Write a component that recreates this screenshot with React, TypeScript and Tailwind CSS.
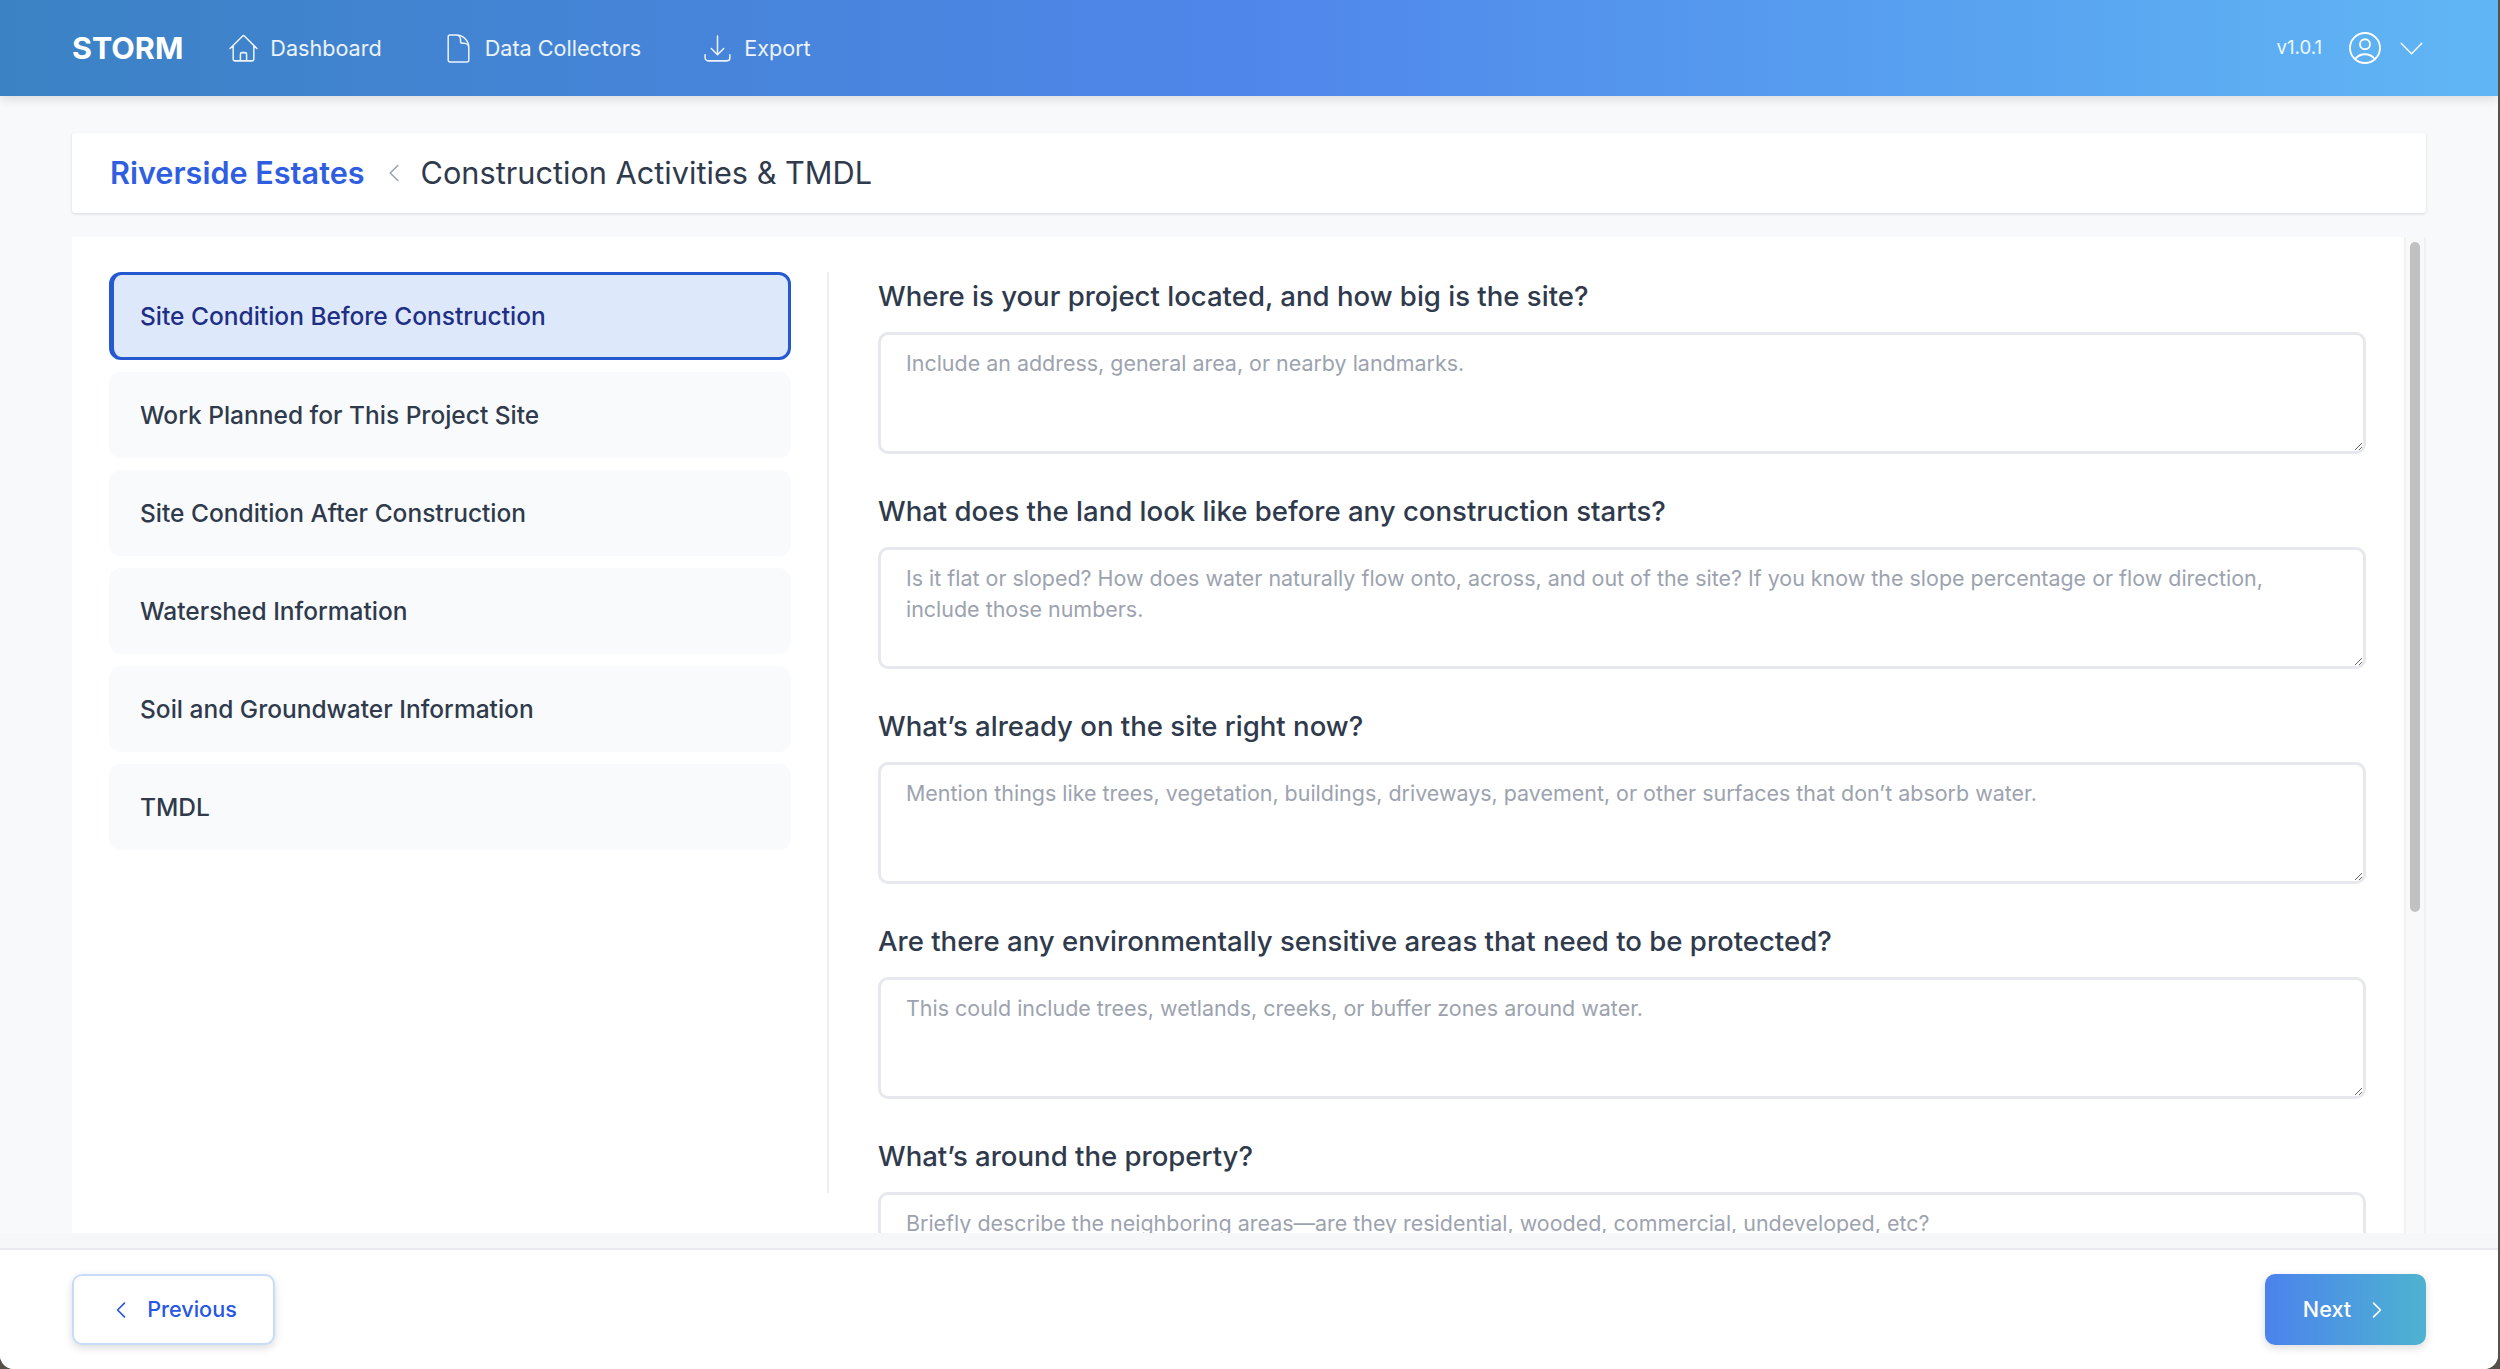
import React from 'react';
import {
  HiOutlineHome,
  HiOutlineDocument,
  HiOutlineArrowDownTray,
  HiOutlineUserCircle,
  HiOutlineChevronDown,
  HiOutlineChevronLeft,
  HiOutlineChevronRight,
} from 'react-icons/hi2';

const sections = [
  'Site Condition Before Construction',
  'Work Planned for This Project Site',
  'Site Condition After Construction',
  'Watershed Information',
  'Soil and Groundwater Information',
  'TMDL',
];

const questions = [
  {
    label: 'Where is your project located, and how big is the site?',
    hint: 'Include an address, general area, or nearby landmarks.',
  },
  {
    label: 'What does the land look like before any construction starts?',
    hint: 'Is it flat or sloped? How does water naturally flow onto, across, and out of the site? If you know the slope percentage or flow direction, include those numbers.',
  },
  {
    label: 'What’s already on the site right now?',
    hint: 'Mention things like trees, vegetation, buildings, driveways, pavement, or other surfaces that don’t absorb water.',
  },
  {
    label: 'Are there any environmentally sensitive areas that need to be protected?',
    hint: 'This could include trees, wetlands, creeks, or buffer zones around water.',
  },
  {
    label: 'What’s around the property?',
    hint: 'Briefly describe the neighboring areas—are they residential, wooded, commercial, undeveloped, etc?',
  },
];

const navItems = [
  { label: 'Dashboard', icon: HiOutlineHome },
  { label: 'Data Collectors', icon: HiOutlineDocument },
  { label: 'Export', icon: HiOutlineArrowDownTray },
];

export default function App() {
  return (
    <div className="h-screen w-full overflow-hidden bg-[#55504a] pr-[2px] font-['Inter','Liberation_Sans',sans-serif]">
      <div className="flex h-full flex-col overflow-hidden rounded-b-[14px] bg-[#f8f9fb]">
        <header className="z-10 flex h-[96px] shrink-0 items-center bg-gradient-to-r from-[#3b82c4] via-[#4f86ea] to-[#60b6f4] pl-[72px] pr-[70px] text-white shadow-[0_3px_10px_rgba(0,0,0,0.12)]">
          <span className="text-[30.5px] font-bold leading-none">STORM</span>
          <nav className="ml-[44px] flex items-center gap-[60px]">
            {navItems.map((item) => (
              <div key={item.label} className="flex items-center gap-[10px] text-[21.6px] text-white/90">
                <item.icon size={33} strokeWidth={1.1} />
                <span>{item.label}</span>
              </div>
            ))}
          </nav>
          <div className="ml-auto flex items-center text-white/90">
            <span className="text-[18.6px]">v1.0.1</span>
            <HiOutlineUserCircle size={40} strokeWidth={1.1} className="ml-[23px] text-white" />
            <HiOutlineChevronDown size={33} strokeWidth={1} className="ml-[10px] text-white" />
          </div>
        </header>

        <main className="flex min-h-0 flex-1 flex-col px-[72px] pt-[37px]">
          <div className="flex h-[80px] shrink-0 items-center rounded-[3px] bg-white px-[38px] shadow-[0_1px_3px_rgba(0,0,0,0.14)]">
            <span className="text-[30.6px] font-semibold text-[#2f5fe0]">Riverside Estates</span>
            <HiOutlineChevronLeft size={24} strokeWidth={1.6} className="ml-[17px] text-[#9ca3af]" />
            <span className="ml-[15px] text-[30.7px] text-[#2f3a4c]">Construction Activities &amp; TMDL</span>
          </div>

          <div className="mt-[24px] flex min-h-0 flex-1 overflow-hidden bg-white">
            <aside className="w-[757px] shrink-0 pb-[40px] pl-[37px] pt-[35px]">
              <div className="flex h-full flex-col gap-[12px] border-r-2 border-[#eceef1] pr-[36px]">
                {sections.map((name, i) => (
                  <div
                    key={name}
                    className={
                      i === 0
                        ? 'flex h-[88px] items-center rounded-[12px] border-[3px] border-l-[5px] border-[#2459cf] bg-[#dee8fb] pl-[26px] text-[24.5px] font-medium text-[#1e2f86]'
                        : 'flex h-[86px] items-center rounded-[12px] bg-[#f9fafb] pl-[31px] text-[24.5px] font-medium text-[#2f3a4c]'
                    }
                  >
                    {name}
                  </div>
                ))}
              </div>
            </aside>

            <section className="min-w-0 flex-1 overflow-hidden pl-[49px] pr-[38px] pt-[39px]">
              {questions.map((q) => (
                <div key={q.label} className="mb-[37px]">
                  <label className="block text-[27.55px] font-medium leading-[40px] text-[#2f3a4c]">{q.label}</label>
                  <textarea
                    placeholder={q.hint}
                    className="mt-[16px] block h-[122px] w-full rounded-[10px] border-[3px] border-[#e6e8ed] bg-white px-[25px] py-[13px] text-[21.45px] leading-[31px] outline-none placeholder:text-[#9ca3af]"
                  />
                </div>
              ))}
            </section>

            <div className="w-[22px] shrink-0 border-x-2 border-[#f0f1f3] bg-[#f9f9fa] px-[4px] pt-[5px]">
              <div className="h-[670px] rounded-full bg-[#c1c1c1]" />
            </div>
          </div>
        </main>

        <div className="h-[15px] shrink-0 bg-[#f6f7f9]" />

        <footer className="flex h-[121px] shrink-0 items-start justify-between border-t-2 border-[#e8eaee] bg-white px-[72px] pt-[24px]">
          <button className="flex h-[71px] w-[203px] items-center justify-center gap-[15px] rounded-[10px] border-2 border-[#c7dcfa] bg-white text-[21.6px] font-medium text-[#2757e6] shadow-[0_3px_8px_rgba(0,0,0,0.14)]">
            <HiOutlineChevronLeft size={22} strokeWidth={1.8} />
            Previous
          </button>
          <button className="flex h-[71px] w-[161px] items-center justify-center gap-[15px] rounded-[10px] bg-gradient-to-r from-[#4c82ec] to-[#4fb2d0] text-[21.6px] font-medium text-white shadow-[0_3px_8px_rgba(0,0,0,0.14)]">
            Next
            <HiOutlineChevronRight size={22} strokeWidth={1.8} />
          </button>
        </footer>
      </div>
    </div>
  );
}
